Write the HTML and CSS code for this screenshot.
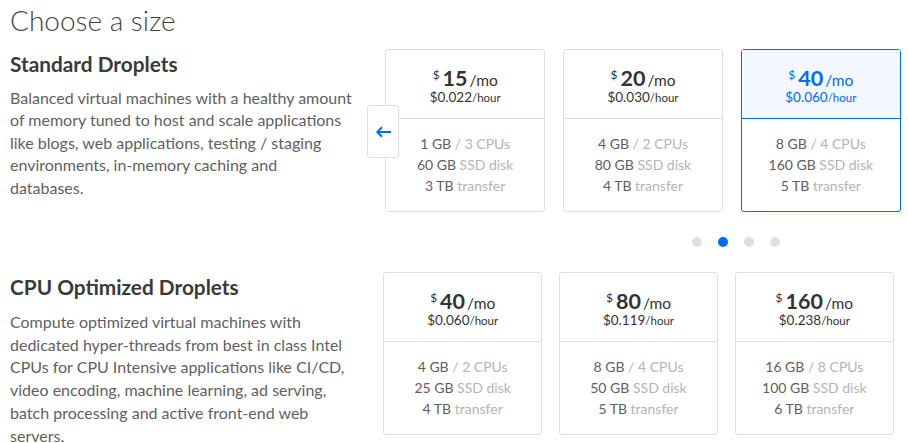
FILE: index.html
```html
<!DOCTYPE html>
<html>
<head>
<meta charset="utf-8">
<link rel="stylesheet" href="styles.css">
</head>
<body>
<div class="page">
  <h1 class="title">Choose a size</h1>

  <section class="group group-standard">
    <div class="intro">
      <h2 class="group-title">Standard Droplets</h2>
      <p class="group-desc">Balanced virtual machines with a healthy amount of memory tuned to host and scale applications like blogs, web applications, testing / staging environments, in-memory caching and databases.</p>
    </div>
    <div class="carousel">
      <div class="cards">
        <button class="prev" aria-label="Previous">
          <svg width="17" height="12" viewBox="0 0 17 12"><path d="M16 6H2.5M7 1.3L2.3 6 7 10.7" fill="none" stroke="#0069ff" stroke-width="2"/></svg>
        </button>
        <div class="card">
          <div class="card-top">
            <div class="price"><span class="cur">$</span><span class="amt">15</span><span class="per">/mo</span></div>
            <div class="hourly">$0.022<span class="hr">/hour</span></div>
          </div>
          <div class="card-specs">
            <div>1 GB <span class="muted">/ 3 CPUs</span></div>
            <div>60 GB <span class="muted">SSD disk</span></div>
            <div>3 TB <span class="muted">transfer</span></div>
          </div>
        </div>
        <div class="card">
          <div class="card-top">
            <div class="price"><span class="cur">$</span><span class="amt">20</span><span class="per">/mo</span></div>
            <div class="hourly">$0.030<span class="hr">/hour</span></div>
          </div>
          <div class="card-specs">
            <div>4 GB <span class="muted">/ 2 CPUs</span></div>
            <div>80 GB <span class="muted">SSD disk</span></div>
            <div>4 TB <span class="muted">transfer</span></div>
          </div>
        </div>
        <div class="card selected">
          <div class="card-top">
            <div class="price"><span class="cur">$</span><span class="amt">40</span><span class="per">/mo</span></div>
            <div class="hourly">$0.060<span class="hr">/hour</span></div>
          </div>
          <div class="card-specs">
            <div>8 GB <span class="muted">/ 4 CPUs</span></div>
            <div>160 GB <span class="muted">SSD disk</span></div>
            <div>5 TB <span class="muted">transfer</span></div>
          </div>
        </div>
      </div>
      <div class="dots">
        <span class="dot"></span><span class="dot active"></span><span class="dot"></span><span class="dot"></span>
      </div>
    </div>
  </section>

  <section class="group group-cpu">
    <div class="intro intro-cpu">
      <h2 class="group-title">CPU Optimized Droplets</h2>
      <p class="group-desc desc-cpu">Compute optimized virtual machines with dedicated hyper-threads from best in class Intel CPUs for CPU Intensive applications like CI/CD, video encoding, machine learning, ad serving, batch processing and active front-end web servers.</p>
    </div>
    <div class="cards cards-cpu">
      <div class="card">
        <div class="card-top">
          <div class="price"><span class="cur">$</span><span class="amt">40</span><span class="per">/mo</span></div>
          <div class="hourly">$0.060<span class="hr">/hour</span></div>
        </div>
        <div class="card-specs">
          <div>4 GB <span class="muted">/ 2 CPUs</span></div>
          <div>25 GB <span class="muted">SSD disk</span></div>
          <div>4 TB <span class="muted">transfer</span></div>
        </div>
      </div>
      <div class="card">
        <div class="card-top">
          <div class="price"><span class="cur">$</span><span class="amt">80</span><span class="per">/mo</span></div>
          <div class="hourly">$0.119<span class="hr">/hour</span></div>
        </div>
        <div class="card-specs">
          <div>8 GB <span class="muted">/ 4 CPUs</span></div>
          <div>50 GB <span class="muted">SSD disk</span></div>
          <div>5 TB <span class="muted">transfer</span></div>
        </div>
      </div>
      <div class="card">
        <div class="card-top">
          <div class="price"><span class="cur">$</span><span class="amt">160</span><span class="per">/mo</span></div>
          <div class="hourly">$0.238<span class="hr">/hour</span></div>
        </div>
        <div class="card-specs">
          <div>16 GB <span class="muted">/ 8 CPUs</span></div>
          <div>100 GB <span class="muted">SSD disk</span></div>
          <div>6 TB <span class="muted">transfer</span></div>
        </div>
      </div>
    </div>
  </section>
</div>
</body>
</html>
```

FILE: styles.css
```css
* { box-sizing: border-box; }
html, body { margin: 0; padding: 0; background: #fff; }
body {
  font-family: Lato, "Liberation Sans", sans-serif;
  color: #444;
  overflow: hidden;
}
.page { padding: 0 0 0 10px; width: 908px; }
.title {
  margin: 0;
  height: 44px;
  font-size: 28px;
  line-height: 40px;
  font-weight: 300;
  color: #444;
}
.group { display: flex; align-items: flex-start; }
.group-standard { margin-top: 5px; }
.group-cpu { margin-top: 25px; }
.intro { width: 375px; padding-right: 20px; flex: none; }
.intro-cpu { width: 373px; }
.group-title {
  margin: 0;
  font-size: 20.8px;
  line-height: 24px;
  font-weight: 700;
  color: #3a3a3a;
  padding-top: 3px;
}
.group-desc {
  margin: 11px 0 0;
  width: 343px;
  font-size: 16px;
  line-height: 22.4px;
  color: #5f5f5f;
}
.desc-cpu { width: auto; margin-top: 12px; line-height: 22.7px; }
.carousel { width: 516px; flex: none; }
.cards {
  position: relative;
  display: grid;
  grid-template-columns: repeat(3, 1fr);
  column-gap: 17.5px;
}
.cards-cpu { width: 511px; column-gap: 16.5px; flex: none; }
.prev {
  position: absolute;
  left: -18px;
  top: 56px;
  width: 32px;
  height: 53px;
  padding: 0;
  border: 1px solid #dfdfdf;
  border-radius: 3px;
  background: #fff;
  display: flex;
  align-items: center;
  justify-content: center;
  z-index: 2;
}
.card {
  border: 1px solid #dfdfdf;
  border-radius: 3px;
  background: #fff;
  text-align: center;
  height: 163px;
  display: flex;
  flex-direction: column;
}
.card-top {
  height: 69px;
  padding-top: 12px;
  border-bottom: 1px solid #dfdfdf;
  color: #333;
}
.price { height: 26px; line-height: 26px; white-space: nowrap; }
.cur { font-size: 12px; vertical-align: 7px; margin-right: 3px; }
.amt { font-size: 21.5px; font-weight: 700; }
.per { font-size: 15.5px; margin-left: 2px; }
.hourly { font-size: 13.5px; line-height: 16px; margin-top: 1px; }
.hr { font-size: 11.5px; }
.card-specs {
  flex: 1;
  display: flex;
  flex-direction: column;
  justify-content: center;
  padding-bottom: 2px;
  font-size: 14px;
  line-height: 21px;
  color: #5e5e5e;
}
.muted { color: #b4b4b4; }
.card.selected { border-color: #0069ff; }
.card.selected .card-top {
  background: #f3f7ff;
  border-bottom-color: #0069ff;
  color: #0069ff;
}
.dots {
  display: flex;
  gap: 16px;
  padding-left: 307px;
  margin-top: 25px;
}
.dot {
  width: 10px;
  height: 10px;
  border-radius: 50%;
  background: #dfdfdf;
}
.dot.active { background: #0069ff; }
```
